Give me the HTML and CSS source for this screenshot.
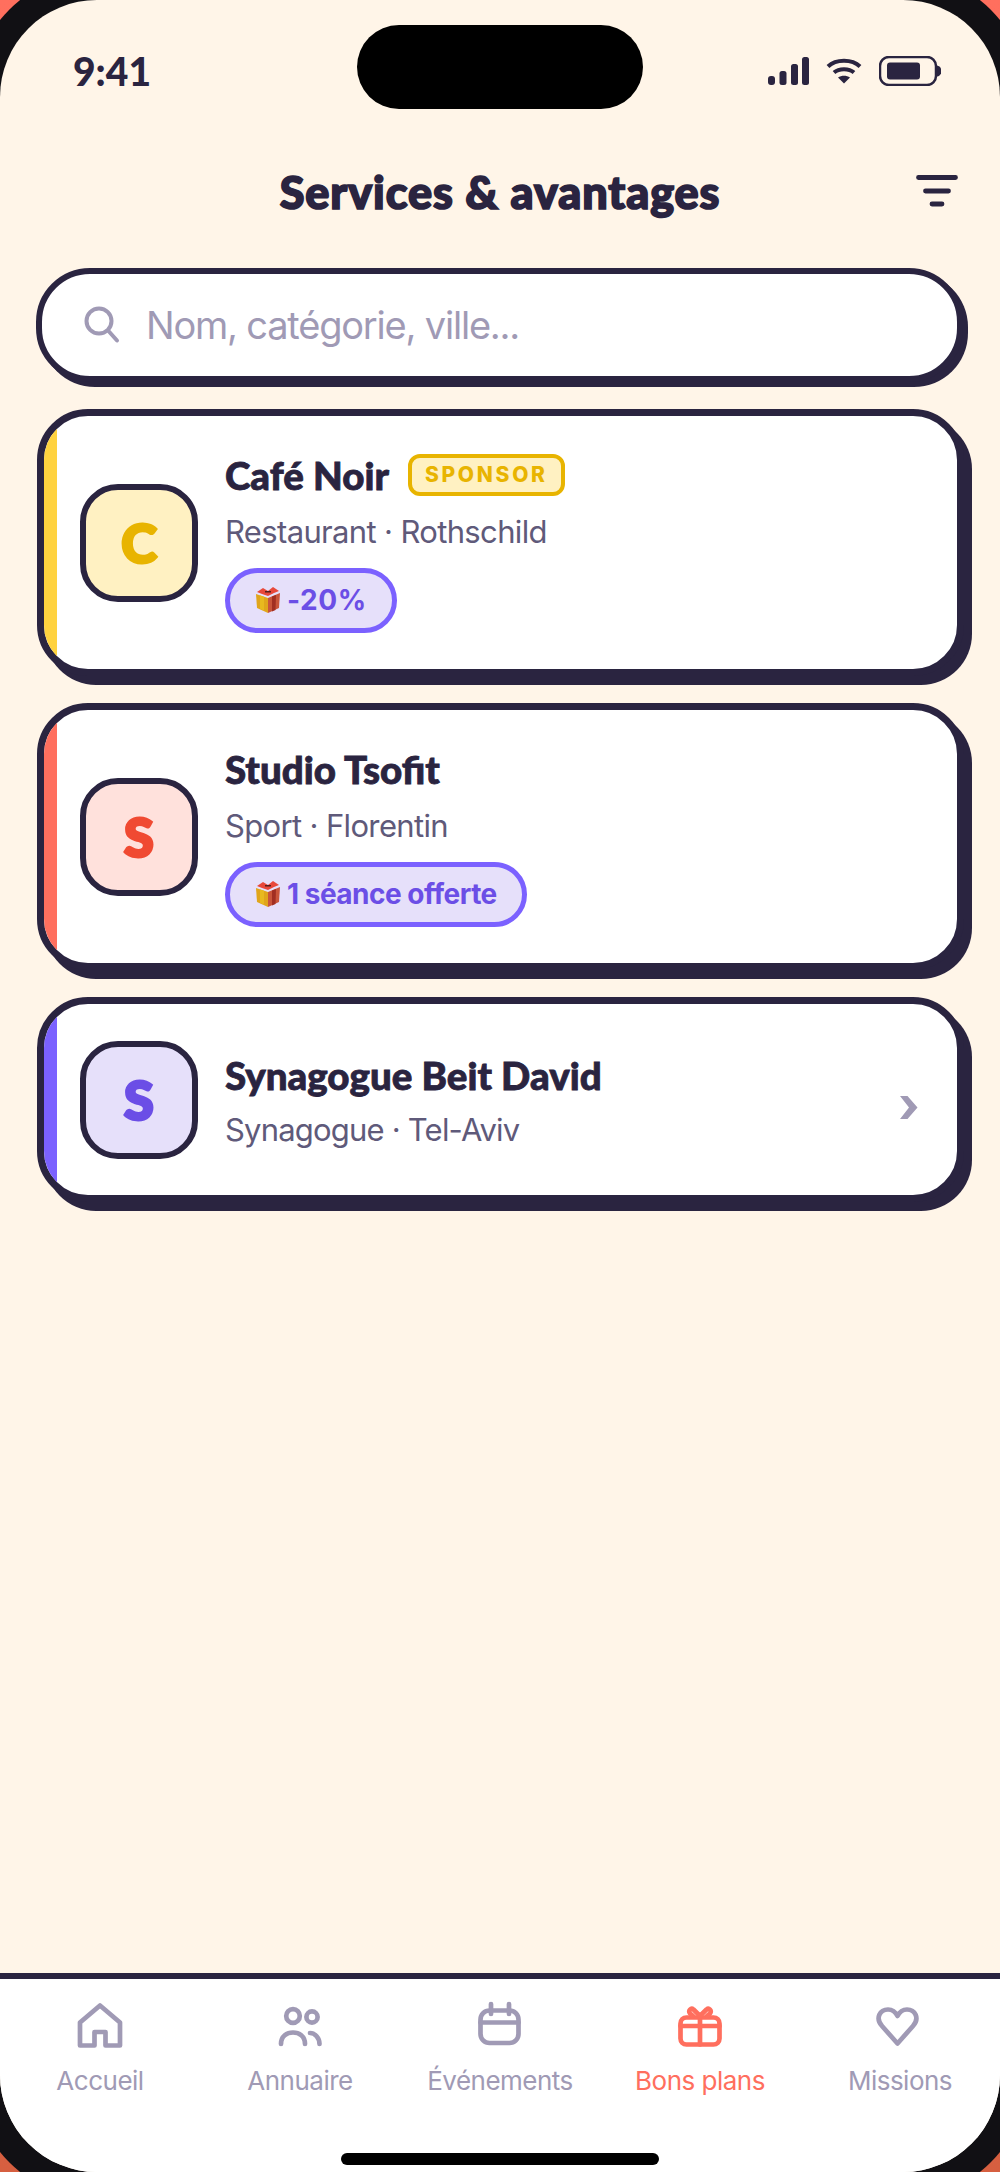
FILE: index.html
```html
<!DOCTYPE html>
<html lang="fr">
<head>
<meta charset="utf-8">
<title>Services &amp; avantages</title>
<link rel="stylesheet" href="styles.css">
</head>
<body>
<div class="frame"></div>
<main class="screen">
  <div class="island"></div>
  <header class="status">
    <span class="time">9:41</span>
    <div class="status-icons">
      <svg class="ic-signal" viewBox="0 0 42 28"><rect x="0" y="19" width="7" height="9" rx="3"/><rect x="11.5" y="14" width="7" height="14" rx="2.5"/><rect x="23" y="7" width="7" height="21" rx="2.5"/><rect x="34" y="0" width="7" height="28" rx="2.5"/></svg>
      <svg class="ic-wifi" viewBox="0 0 36 26"><path class="st" d="M2 8.5C10 .8 26 .8 34 8.5"/><path class="st" d="M8 14.5C13 10 23 10 28 14.5"/><path d="M18 25.5l-6-6c3.500-2.500 8.500-2.500 12 0z"/></svg>
      <svg class="ic-batt" viewBox="0 0 62 30"><rect class="st2" x="1" y="1" width="56" height="28" rx="9"/><rect x="8" y="6.500" width="33" height="17" rx="3"/><path d="M58 9.500c3 .5 4.500 3 4.500 5.500s-1.500 5-4.500 5.500z"/></svg>
    </div>
  </header>

  <div class="topbar">
    <h1 class="title">Services &amp; avantages</h1>
    <svg class="filter" viewBox="0 0 42 33"><path d="M2.500 2.500h37M9.500 16h23M16 29h10"/></svg>
  </div>

  <div class="search">
    <svg class="search-ic" viewBox="0 0 38 38"><circle cx="16" cy="15" r="12.500"/><path d="M25.500 25l8.500 9.500"/></svg>
    <span class="placeholder">Nom, catégorie, ville...</span>
  </div>

  <section class="list">
    <article class="card card-yellow">
      <div class="avatar">C</div>
      <div class="info">
        <div class="name-row"><h2 class="name">Café Noir</h2><span class="sponsor">SPONSOR</span></div>
        <p class="sub">Restaurant · Rothschild</p>
        <div class="pill pill-short">
          <svg class="gift-emoji" viewBox="0 0 28 28"><path fill="#e0a51b" d="M2 8l12 4v15L3 22z"/><path fill="#c9553a" d="M14 12l12-5-1 15-11 5z"/><path fill="#a12f22" d="M18 10.500l4-1.500-.5 15-3.500 1.500z"/><path fill="#e8b91f" d="M6 9.500l4 1.300v14l-4-2z"/><path fill="#e8483a" d="M3 6l6-4 5 3 5-4 6 4-5 2-6 3-6-2z"/><path fill="#54201f" d="M11 5h6v1.500h-6z"/></svg>
          <span>-20%</span>
        </div>
      </div>
    </article>

    <article class="card card-coral">
      <div class="avatar">S</div>
      <div class="info">
        <div class="name-row"><h2 class="name">Studio Tsofit</h2></div>
        <p class="sub">Sport · Florentin</p>
        <div class="pill">
          <svg class="gift-emoji" viewBox="0 0 28 28"><path fill="#e0a51b" d="M2 8l12 4v15L3 22z"/><path fill="#c9553a" d="M14 12l12-5-1 15-11 5z"/><path fill="#a12f22" d="M18 10.500l4-1.500-.5 15-3.500 1.500z"/><path fill="#e8b91f" d="M6 9.500l4 1.300v14l-4-2z"/><path fill="#e8483a" d="M3 6l6-4 5 3 5-4 6 4-5 2-6 3-6-2z"/><path fill="#54201f" d="M11 5h6v1.500h-6z"/></svg>
          <span>1 séance offerte</span>
        </div>
      </div>
    </article>

    <article class="card card-violet">
      <div class="avatar">S</div>
      <div class="info info-plain">
        <div class="name-row"><h2 class="name">Synagogue Beit David</h2></div>
        <p class="sub">Synagogue · Tel-Aviv</p>
      </div>
      <svg class="chevron" viewBox="0 0 18 23"><path d="M0 0h7.500l10 11.500-10 11.500H0l9-11.500z"/></svg>
    </article>
  </section>

  <nav class="tabbar">
    <div class="tabs">
      <a class="tab">
        <svg viewBox="0 0 60 60"><path d="M10 27.500L30 10.500l20 17V50.500H35.500V37h-11v13.500H10z"/></svg>
        <span>Accueil</span>
      </a>
      <a class="tab">
        <svg viewBox="0 0 60 60"><circle cx="23" cy="21" r="6.800"/><circle cx="42" cy="22" r="5.600"/><path d="M11 49c0-8 6-11.500 12-11.500S35 41 35 49"/><path d="M40 38c5 0 9.500 5 9.500 11"/></svg>
        <span>Annuaire</span>
      </a>
      <a class="tab">
        <svg viewBox="0 0 60 60"><rect x="10.500" y="15.500" width="38" height="32.500" rx="9"/><path d="M21 9v10M39 9v10M10.500 27.500h38"/></svg>
        <span>Événements</span>
      </a>
      <a class="tab active">
        <svg viewBox="0 0 60 60"><rect x="10.500" y="22.500" width="39" height="27" rx="6"/><path d="M10.500 31h39M30 22.500v27"/><path d="M30 21l-6.500-6.500c-2.500-2-5.500 1-3.500 4l3 2.500M30 21l6.500-6.500c2.500-2 5.500 1 3.500 4l-3 2.500"/></svg>
        <span>Bons plans</span>
      </a>
      <a class="tab">
        <svg viewBox="0 0 60 60"><path d="M27.500 48.500L12 31c-7-8-2-16.500 6-16.500 4 0 7.500 2.500 9.500 6.500 2-4 5.500-6.500 9.500-6.500 8 0 13 8.500 6 16.500z"/></svg>
        <span>Missions</span>
      </a>
    </div>
    <div class="home-indicator"></div>
  </nav>
</main>
</body>
</html>
```

FILE: styles.css
```css
* { box-sizing: border-box; }

html, body {
  margin: 0;
  padding: 0;
  width: 1000px;
  height: 2172px;
  overflow: hidden;
}

body {
  position: relative;
  background: linear-gradient(#ff6f5e, #d65f40);
  font-family: "Inter", "Liberation Sans", sans-serif;
  color: #2a2440;
}

.frame {
  position: absolute;
  inset: -28px;
  background: #111014;
  border-radius: 128px;
}

.screen {
  position: relative;
  width: 1000px;
  height: 2172px;
  background: #fff5e8;
  border-radius: 97px;
  overflow: hidden;
  display: flex;
  flex-direction: column;
}

.island {
  position: absolute;
  left: 357px;
  top: 25px;
  width: 286px;
  height: 84px;
  background: #000;
  border-radius: 42px;
}

.status {
  height: 142px;
  flex: none;
  display: flex;
  align-items: center;
  justify-content: space-between;
  padding: 0 59px 0 73px;
}

.time {
  font-family: "Lato", sans-serif;
  font-weight: 900;
  font-size: 39px;
  line-height: 1;
}

.status-icons {
  display: flex;
  align-items: center;
  gap: 17px;
}

.status-icons svg { display: block; fill: #2a2440; }
.ic-signal { width: 42px; height: 28px; margin-right: -1px; }
.ic-wifi { width: 36px; height: 26px; }
.ic-batt { width: 62px; height: 30px; }
.status-icons .st { fill: none; stroke: #2a2440; stroke-width: 4; }
.status-icons .st2 { fill: none; stroke: #2a2440; stroke-width: 2.5; }

.topbar {
  height: 100px;
  flex: none;
  display: flex;
  align-items: center;
  justify-content: center;
  position: relative;
  margin-bottom: 26px;
}

.title {
  margin: 0;
  font-family: "Lato", sans-serif;
  font-weight: 900;
  font-size: 45px;
  line-height: 1;
  letter-spacing: .9px;
  -webkit-text-stroke: 1.700px #2a2440;
}

.filter {
  position: absolute;
  right: 42px;
  top: 33px;
  width: 42px;
  height: 33px;
  fill: none;
  stroke: #2a2440;
  stroke-width: 4.800;
  stroke-linecap: round;
}

.search {
  flex: none;
  height: 114px;
  margin: 0 37px 0 36px;
  background: #fff;
  border: 6px solid #2a2440;
  border-radius: 54px;
  box-shadow: 5px 5px 0 #2a2440;
  display: flex;
  align-items: center;
  padding-left: 41px;
  gap: 25px;
}

.search-ic {
  width: 38px;
  height: 38px;
  fill: none;
  stroke: #a09ab5;
  stroke-width: 4;
  stroke-linecap: round;
}

.placeholder {
  font-size: 38px;
  color: #a09ab5;
  letter-spacing: -1.200px;
}

.list {
  display: flex;
  flex-direction: column;
  gap: 27px;
  margin: 27px 36px 0 37px;
}

.card {
  position: relative;
  display: flex;
  align-items: center;
  gap: 27px;
  background: #fff;
  border: 7px solid #2a2440;
  border-radius: 51px;
  box-shadow: 8px 9px 0 #2a2440;
  padding: 36.500px 39px 36.500px 36px;
  overflow: hidden;
}

.card::before {
  content: "";
  position: absolute;
  left: 0;
  top: 0;
  bottom: 0;
  width: 13px;
}

.card-yellow::before { background: #ffd23f; }
.card-coral::before { background: #ff6f5e; }
.card-violet::before { background: #7b61ff; }

.avatar {
  flex: none;
  width: 118px;
  height: 118px;
  border: 6px solid #2a2440;
  border-radius: 38px;
  display: flex;
  align-items: center;
  justify-content: center;
  font-family: "Lato", sans-serif;
  font-weight: 900;
  font-size: 54px;
  line-height: 1;
}

.card-yellow .avatar { background: #fff1c2; color: #e8b400; -webkit-text-stroke: 3px #e8b400; }
.card-coral .avatar { background: #ffe1dc; color: #f04a32; -webkit-text-stroke: 3px #f04a32; }
.card-violet .avatar { background: #e6e0fa; color: #6b4ee6; -webkit-text-stroke: 3px #6b4ee6; }

.info { flex: 1; min-width: 0; }
.info-plain { margin-top: 3px; }
.info-plain .sub { margin-top: 13px; letter-spacing: -.8px; }

.name-row {
  display: flex;
  align-items: center;
  gap: 19px;
  height: 44px;
}

.name {
  margin: 0;
  font-family: "Lato", sans-serif;
  font-weight: 900;
  font-size: 38.500px;
  line-height: 44px;
  -webkit-text-stroke: .8px #2a2440;
}

.sponsor {
  height: 42px;
  padding: 0 13px;
  display: flex;
  align-items: center;
  background: #fff1c2;
  border: 4px solid #e8b400;
  border-radius: 12px;
  color: #e8b400;
  font-size: 21px;
  font-weight: 800;
  letter-spacing: 2.700px;
}

.sub {
  margin: 15px 0 0;
  font-size: 31px;
  line-height: 40px;
  color: #5f5a7a;
  letter-spacing: -.65px;
}

.pill {
  display: flex;
  width: fit-content;
  align-items: center;
  gap: 5px;
  height: 65px;
  margin-top: 16px;
  padding: 0 25px 0 24px;
  background: #e6e0fa;
  border: 5px solid #7b61ff;
  border-radius: 33px;
  color: #6b4ee6;
  font-size: 28px;
  font-weight: 700;
  letter-spacing: -.5px;
}

.pill-short { letter-spacing: .6px; }

.gift-emoji { width: 28px; height: 28px; display: block; }

.chevron {
  flex: none;
  width: 18px;
  height: 23px;
  margin-top: 16px;
  fill: #a09ab5;
}

.tabbar {
  margin-top: auto;
  height: 199px;
  flex: none;
  background: #fff;
  border-top: 6px solid #2a2440;
  display: flex;
  flex-direction: column;
  align-items: center;
}

.tabs {
  display: flex;
  width: 100%;
  padding-top: 16px;
}

.tab {
  flex: 1;
  display: flex;
  flex-direction: column;
  align-items: center;
  color: #a09ab5;
  font-size: 26px;
  line-height: 32px;
  letter-spacing: -.5px;
}

.tab svg {
  width: 60px;
  height: 60px;
  margin-bottom: 10px;
  fill: none;
  stroke: currentColor;
  stroke-width: 4.700;
  stroke-linecap: round;
  stroke-linejoin: round;
}

.tab.active { color: #ff6f5e; }

.home-indicator {
  width: 318px;
  height: 11.500px;
  margin-top: 56px;
  background: #000;
  border-radius: 6px;
}
```
